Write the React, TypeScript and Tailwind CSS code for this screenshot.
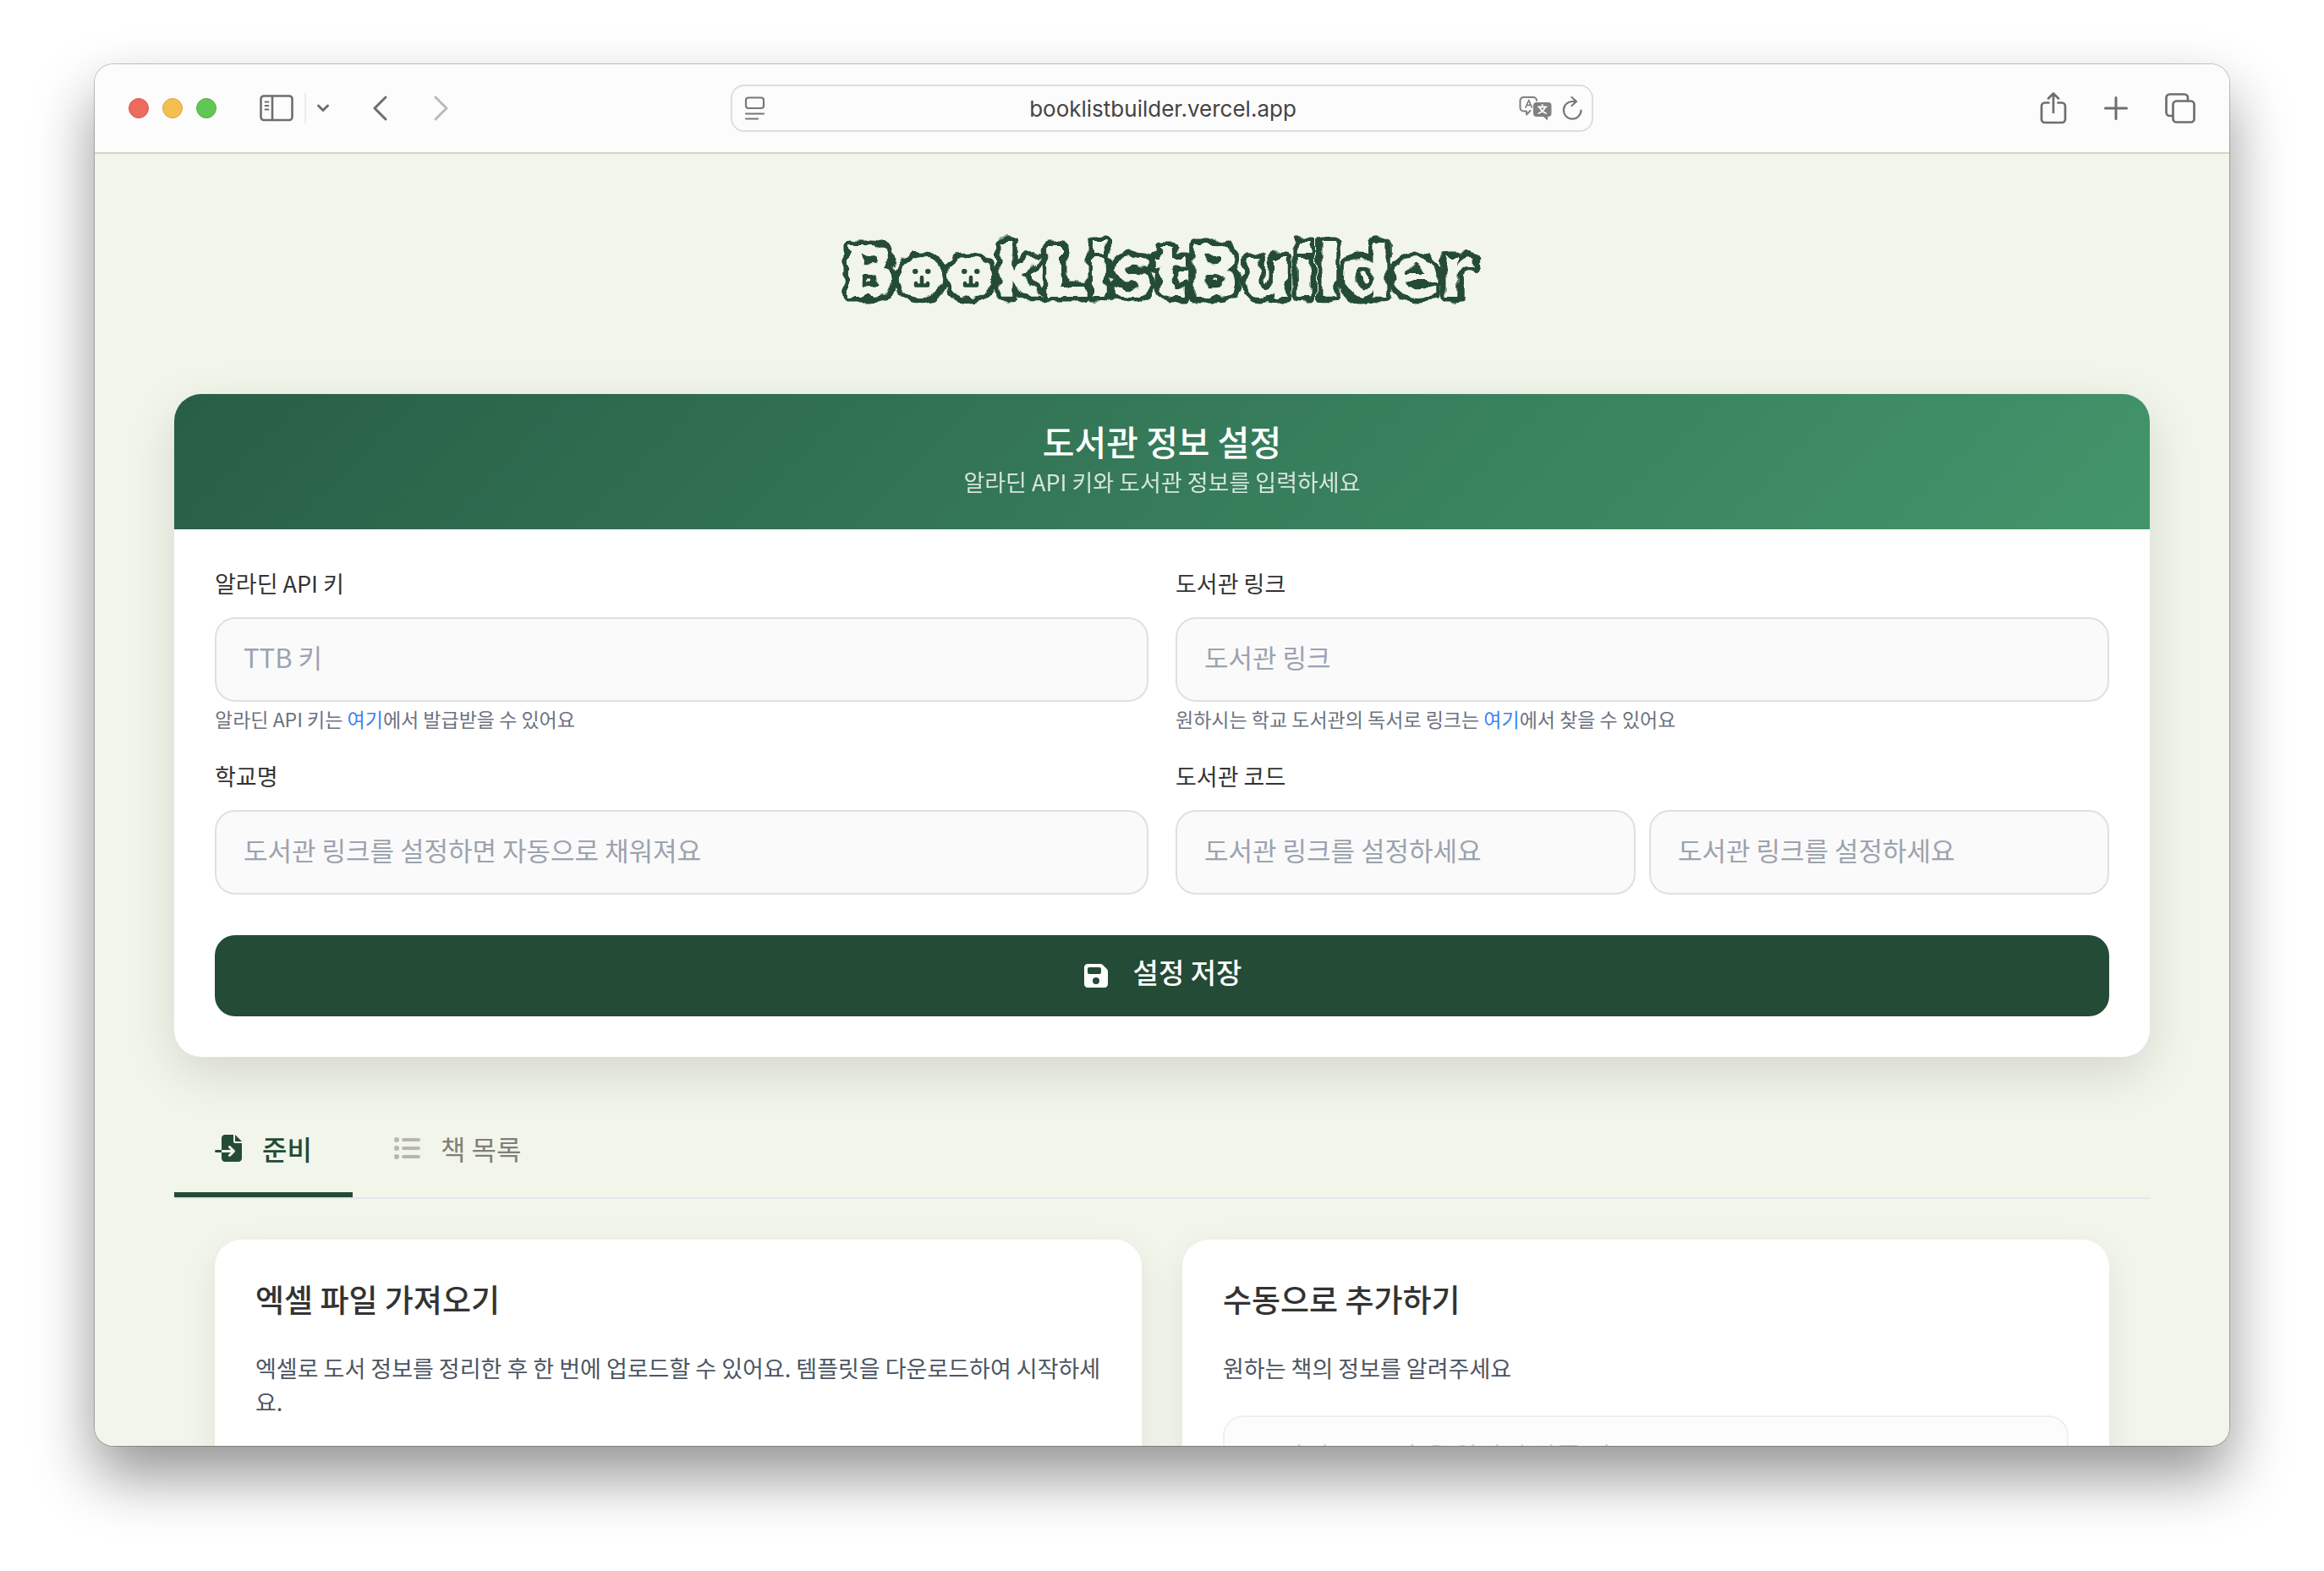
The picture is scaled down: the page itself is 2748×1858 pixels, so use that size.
import React from "react";
import { FaFileImport, FaFloppyDisk, FaListUl } from "react-icons/fa6";

const field =
  "h-[100px] w-full min-w-0 rounded-3xl border-2 border-[#e0e0e0] bg-[#fafafa] px-8 pb-2 text-[31px] text-[#333] placeholder:text-[#9ca3af]";
const label = "block text-[27px] leading-8 text-[#333]";
const help = "pb-1 text-[23px] leading-10 text-[#6b7280]";

function TrafficLight({ name, className }: { name: string; className: string }) {
  return <button aria-label={name} className={"size-6 rounded-full border " + className} />;
}

function Toolbar() {
  return (
    <header className="grid h-[106px] shrink-0 grid-cols-[1fr_1020px_1fr] items-center border-b-2 border-[#d3d4cc] bg-[#fcfcfc] px-10 text-[#6e6e6e]">
      <div className="flex items-center">
        <div className="flex gap-4">
          <TrafficLight name="Close" className="border-[#d85a50] bg-[#ed6a5f]" />
          <TrafficLight name="Minimize" className="border-[#dca542] bg-[#f5bf4f]" />
          <TrafficLight name="Zoom" className="border-[#54b044] bg-[#62c655]" />
        </div>
        <button aria-label="Sidebar" className="ml-[51px]">
          <svg width="40" height="32" viewBox="0 0 40 32" fill="none" stroke="currentColor" strokeWidth="2.6" strokeLinecap="round">
            <rect x="1.5" y="1.5" width="37" height="28.5" rx="3.5" />
            <path d="M15 2v28" />
            <path d="M6.5 8.5h4M6.5 13h4M6.5 17.5h4" strokeWidth="1.8" />
          </svg>
        </button>
        <span className="ml-[13px] h-9 w-0.5 bg-[#ebebeb]" />
        <button aria-label="Tab groups" className="ml-3">
          <svg width="16" height="12" viewBox="0 0 16 12" fill="none" stroke="currentColor" strokeWidth="3" strokeLinecap="round" strokeLinejoin="round">
            <path d="M2.500 3l5.500 5.500L13.500 3" />
          </svg>
        </button>
        <button aria-label="Back" className="ml-[50px]">
          <svg width="20" height="30" viewBox="0 0 20 30" fill="none" stroke="currentColor" strokeWidth="3" strokeLinecap="round" strokeLinejoin="round">
            <path d="M16 2L3 15l13 13" />
          </svg>
        </button>
        <button aria-label="Forward" className="ml-[51px] text-[#bababa]">
          <svg width="20" height="30" viewBox="0 0 20 30" fill="none" stroke="currentColor" strokeWidth="3" strokeLinecap="round" strokeLinejoin="round">
            <path d="M4 2l13 13L4 28" />
          </svg>
        </button>
      </div>
      <div className="flex h-[56px] items-center rounded-2xl border-2 border-[#dedede] pr-2.5 pl-3.5">
        <button aria-label="Page menu">
          <svg width="26" height="28" viewBox="0 0 26 28" fill="none" stroke="#777" strokeWidth="2.2" strokeLinecap="round">
            <rect x="2" y="1.5" width="21" height="12.5" rx="3" />
            <path d="M2 20.5h21M2 26.5h14" />
          </svg>
        </button>
        <input
          aria-label="Address"
          defaultValue="booklistbuilder.vercel.app"
          className="ml-12 min-w-0 flex-1 bg-transparent text-center font-['Inter',sans-serif] text-[26px] text-[#444]"
        />
        <button aria-label="Translate">
          <svg width="40" height="30" viewBox="0 0 40 30" fill="none" stroke="#808080" strokeWidth="2" strokeLinecap="round" strokeLinejoin="round">
            <path d="M13.500 18L9 22.500V18.500H5.500A4 4 0 0 1 1.500 14.500V6A4 4 0 0 1 5.500 2H17a4 4 0 0 1 4 4" />
            <path d="M8 14L11.700 5.500 15.400 14M9.300 11.300h4.800" strokeWidth="1.700" />
            <path d="M21 8h13.500a4 4 0 0 1 4 4v9a4 4 0 0 1-4 4H34v4.500L29 25h-8a4 4 0 0 1-4-4v-9a4 4 0 0 1 4-4z" fill="#808080" stroke="none" />
            <path d="M23 13.500h9.500M27.700 11v2.500M24.500 13.500c1 3.500 4 6 7.500 7.500M31 13.500c-1 3.500-4 6-7.500 7.500" stroke="#fcfcfc" strokeWidth="1.900" />
          </svg>
        </button>
        <button aria-label="Reload" className="ml-2.5">
          <svg width="26" height="30" viewBox="0 0 26 30" fill="none" stroke="#777" strokeWidth="2.2" strokeLinecap="round" strokeLinejoin="round">
            <path d="M17.500 7H13.500A10.300 10.300 0 1 0 23.500 17.500" />
            <path d="M12.500 2l5.500 5-5.500 5" />
          </svg>
        </button>
      </div>
      <div className="flex items-center justify-end">
        <button aria-label="Share" className="mr-11">
          <svg width="32" height="40" viewBox="0 0 32 40" fill="none" stroke="currentColor" strokeWidth="2.7" strokeLinecap="round" strokeLinejoin="round">
            <path d="M10.500 13.500H6A4 4 0 0 0 2 17.500V33a4 4 0 0 0 4 4h20a4 4 0 0 0 4-4V17.500a4 4 0 0 0-4-4h-4.500" />
            <path d="M16 25V3M10 8.500L16 2.500l6 6" />
          </svg>
        </button>
        <button aria-label="New tab" className="mr-11">
          <svg width="28" height="28" viewBox="0 0 28 28" fill="none" stroke="currentColor" strokeWidth="3" strokeLinecap="round">
            <path d="M14 1.500v25M1.500 14h25" />
          </svg>
        </button>
        <button aria-label="Tab overview">
          <svg width="36" height="36" viewBox="0 0 36 36" fill="none" stroke="currentColor" strokeWidth="2.7" strokeLinejoin="round">
            <path d="M9 27H5.500A4 4 0 0 1 1.500 23V5.500A4 4 0 0 1 5.500 1.500H23A4 4 0 0 1 27 5.500V9" />
            <rect x="9.5" y="9.5" width="25" height="25" rx="4" />
          </svg>
        </button>
      </div>
    </header>
  );
}

function Face({ x }: { x: number }) {
  return (
    <g fill="none" stroke="#244b36" strokeWidth="4.5" strokeLinecap="round" strokeLinejoin="round">
      <ellipse cx={x} cy="72" rx="19" ry="19" fill="#f2f5ea" stroke="none" />
      <path d={`M${x - 8} 64h0.500M${x + 7} 64h0.500`} strokeWidth="6" />
      <path d={`M${x} 71v8M${x - 7} 78v2.500h14V78`} />
    </g>
  );
}

function Logo() {
  return (
    <h1 className="mt-[75px] mb-[85px] flex justify-center">
      <svg width="800" height="124" viewBox="0 0 800 124">
        <defs>
          <filter id="woolly" x="-5%" y="-10%" width="110%" height="120%" colorInterpolationFilters="sRGB">
            <feTurbulence type="fractalNoise" baseFrequency="0.085" numOctaves="1" seed="4" />
            <feDisplacementMap in="SourceGraphic" scale="13" xChannelSelector="R" yChannelSelector="G" result="d" />
            <feGaussianBlur in="d" stdDeviation="0.5" />
          </filter>
        </defs>
        <g filter="url(#woolly)">
          <text
            x="396"
            y="94"
            textAnchor="middle"
            className="fill-[#f2f5ea] stroke-[#244b36] stroke-[13px] font-['DejaVu_Sans',sans-serif] text-[84px] font-bold [paint-order:stroke_fill] [stroke-linejoin:round]"
          >
            BookListBuilder
          </text>
        </g>
        <Face x={116} />
        <Face x={174} />
      </svg>
    </h1>
  );
}

function Settings() {
  return (
    <section className="overflow-hidden rounded-[32px] bg-white shadow-[0_20px_60px_rgba(0,0,0,0.12)]">
      <div className="flex h-40 flex-col items-center bg-[linear-gradient(135deg,#285e46,#38805d_60%,#43946b)] pt-[30px] text-white">
        <h2 className="text-[41px] leading-[50px] font-medium">도서관 정보 설정</h2>
        <p className="text-[27px] leading-[48px] opacity-80">알라딘 API 키와 도서관 정보를 입력하세요</p>
      </div>
      <form className="p-12" onSubmit={(e) => e.preventDefault()}>
        <div className="grid grid-cols-2 gap-x-8 gap-y-4">
          <div>
            <label htmlFor="key" className={label}>알라딘 API 키</label>
            <input id="key" placeholder="TTB 키" className={field + " mt-6"} />
            <p className={help}>
              알라딘 API 키는 <a href="#key" className="text-[#3b82f6]">여기</a>에서 발급받을 수 있어요
            </p>
          </div>
          <div>
            <label htmlFor="link" className={label}>도서관 링크</label>
            <input id="link" placeholder="도서관 링크" className={field + " mt-6"} />
            <p className={help}>
              원하시는 학교 도서관의 독서로 링크는 <a href="#link" className="text-[#3b82f6]">여기</a>에서 찾을 수 있어요
            </p>
          </div>
          <div className="mt-3">
            <label htmlFor="school" className={label}>학교명</label>
            <input id="school" placeholder="도서관 링크를 설정하면 자동으로 채워져요" className={field + " mt-6"} />
          </div>
          <div className="mt-3">
            <label htmlFor="code" className={label}>도서관 코드</label>
            <div className="mt-6 grid grid-cols-2 gap-4">
              <input id="code" placeholder="도서관 링크를 설정하세요" className={field} />
              <input aria-label="도서관 코드 2" placeholder="도서관 링크를 설정하세요" className={field} />
            </div>
          </div>
        </div>
        <button className="mt-12 flex h-24 w-full items-center justify-center gap-7 rounded-3xl bg-[#244b36] text-[33px] font-medium text-white">
          <FaFloppyDisk className="size-8" />
          <span className="pb-2">설정 저장</span>
        </button>
      </form>
    </section>
  );
}

export default function App() {
  return (
    <div className="h-screen bg-white px-28 pt-[76px] pb-[148px] font-['Noto_Sans_CJK_KR',sans-serif]">
      <div className="flex h-full flex-col overflow-hidden rounded-[22px] shadow-[0_0_0_1px_rgba(0,0,0,0.22),0_36px_70px_rgba(0,0,0,0.42)]">
        <Toolbar />
        <main className="min-h-0 flex-1 overflow-hidden bg-[#f2f5ea] px-[94px] text-[#333]">
          <Logo />
          <Settings />
          <nav className="mt-14 flex border-b-2 border-[#e5e7eb] text-[32px]" role="tablist">
            <button role="tab" aria-selected="true" className="flex h-[110px] items-center gap-6 border-b-[6px] border-[#244b36] px-12 font-medium text-[#244b36]">
              <FaFileImport className="size-8" />
              준비
            </button>
            <button role="tab" aria-selected="false" className="flex h-[110px] items-center gap-6 border-b-[6px] border-transparent px-12 text-[#808078]">
              <FaListUl className="size-8 text-[#b6b8b0]" />
              책 목록
            </button>
          </nav>
          <div className="mt-12 grid grid-cols-2 gap-12 px-12">
            <section className="h-[600px] rounded-[32px] bg-white p-12 shadow-[0_12px_40px_rgba(0,0,0,0.08)]">
              <h3 className="text-[37px] leading-[44px] font-medium">엑셀 파일 가져오기</h3>
              <p className="mt-10 text-[27px] leading-10 break-all text-[#4b5563]">
                엑셀로 도서 정보를 정리한 후 한 번에 업로드할 수 있어요. 템플릿을 다운로드하여 시작하세요.
              </p>
            </section>
            <section className="h-[600px] rounded-[32px] bg-white p-12 shadow-[0_12px_40px_rgba(0,0,0,0.08)]">
              <h3 className="text-[37px] leading-[44px] font-medium">수동으로 추가하기</h3>
              <p className="mt-10 text-[27px] leading-10 text-[#4b5563]">원하는 책의 정보를 알려주세요</p>
              <input aria-label="ISBN" placeholder="13자리 ISBN 혹은 알라딘 상품 링크" className={field + " mt-9 opacity-50"} />
            </section>
          </div>
        </main>
      </div>
    </div>
  );
}
